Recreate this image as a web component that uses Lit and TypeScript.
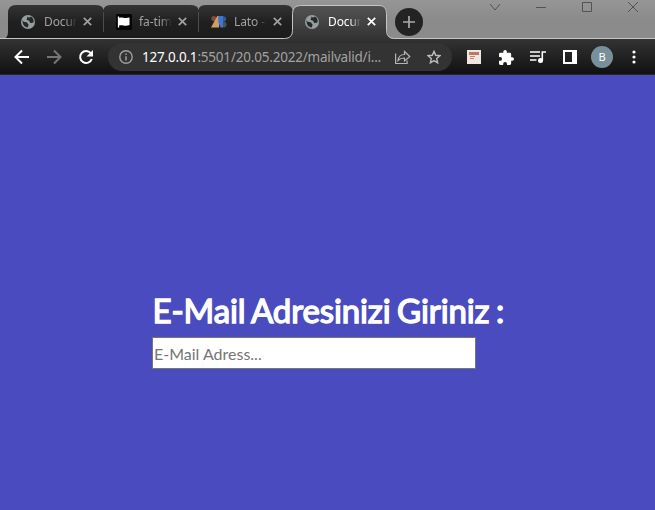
import { LitElement, html, css, svg, nothing } from "lit";
import { customElement, property } from "lit/decorators.js";

const globe = svg`<svg width="14" height="14" viewBox="0 0 14 14"><circle cx="7" cy="7" r="7" fill="#969e9f"/><path d="M1.500 4.800c.3 1.900 2 2.300 3.900 2.500 1.500.2.900 1.600 2.300 2.200l-1 2.900C3.600 12.400 1.200 9.800 1.500 4.800zM6.300 1.600c.5 1.800-.9 2-.7 3 .3 1.200 1.900.6 2.700 1.400.8.900 0 1.900 1.300 2 1 .1 1.900-.4 3-.5.4-2.900-1-5.100-2.800-5.900-.5 1.300-2.100 1.300-3.500 0z" fill="#272929"/></svg>`;
const flag = svg`<svg width="16" height="16" viewBox="0 0 16 16"><rect width="16" height="16" rx="1.5" fill="#050505"/><path d="M2.500 2.500v11" stroke="#fff" stroke-width="1.3"/><path d="M3 4c3-1.4 5 1 10.500-.4v7.500c-5 1.800-7-.8-10.500.5z" fill="#fff"/></svg>`;
const fonts = svg`<svg width="16" height="12" viewBox="0 0 16 12"><circle cx="2.800" cy="2.600" r="2.500" fill="#804b3a"/><path d="M0 11.500 6.200 0H8v11.500z" fill="#cfa05b"/><circle cx="12.600" cy="8.600" r="3" fill="#3e5a50"/><circle cx="12.300" cy="3" r="2.800" fill="#315a9f"/><path d="M7.200 0H12v11.500H9.500L7.200 6z" fill="#3f73d4"/></svg>`;

@customElement("browser-tab")
class BrowserTab extends LitElement {
  @property() label = "";
  @property({ type: Boolean, reflect: true }) active = false;
  @property({ attribute: false }) icon: unknown = nothing;
  static styles = css`
    :host { display: flex; box-sizing: border-box; height: 33px; padding-left: 13px; align-items: center; color: #a1a1a1; position: relative; }
    .icon { width: 16px; display: flex; justify-content: flex-start; flex: none; }
    .title { width: 33px; margin-left: 7px; overflow: hidden; white-space: nowrap; font: 12px/18px "Noto Sans", sans-serif; letter-spacing: -0.1px;
      -webkit-mask-image: linear-gradient(90deg, #000 65%, transparent 100%); mask-image: linear-gradient(90deg, #000 65%, transparent 100%); }
    .close { margin-left: 6px; }
    :host([active]) { color: #fff; }
  `;
  render() {
    return html`<span class="icon">${this.icon}</span><span class="title">${this.label}</span>
      <svg class="close" width="9" height="9" viewBox="0 0 9 9"><path d="M.8.8l7.400 7.400M8.200.8L.8 8.200" stroke="currentColor" stroke-width="1.700"/></svg>`;
  }
}

@customElement("app-root")
class AppRoot extends LitElement {
  static styles = css`
    :host { display: flex; flex-direction: column; height: 510px; overflow: hidden; background: #4a4bbf; font-family: "Noto Sans", "Open Sans", sans-serif; }
    .strip { height: 39px; flex: none; position: relative; display: flex; background: linear-gradient(#969696, #8b8b8b 50%, #8b8b8b); }
    .frames { position: absolute; left: 0; top: 0; }
    .tabs { display: grid; grid-template-columns: 95px 95px 94px 95px; padding: 5px 0 0 8px; }
    .add { width: 28px; height: 28px; margin: 8px 0 0 8px; position: relative; }
    .controls { margin-left: auto; position: relative; height: 15px; }
    svg { display: block; }
    .bar { height: 36px; flex: none; display: flex; align-items: center; background: linear-gradient(#333, #111 97%, #38382f); }
    .nav { display: flex; width: 108px; }
    .url { width: 344px; height: 28px; border-radius: 14px; background: #333; display: flex; align-items: center; color: #a2a2a2; }
    .info { margin-left: 11px; }
    .addr { width: 242px; margin-left: 9px; white-space: nowrap; font-size: 13.500px; line-height: 20px; letter-spacing: -0.2px; }
    .addr b { color: #fff; font-weight: 400; }
    .share { margin-left: 11px; }
    .star { margin-left: 16px; }
    .tools { flex: 1; display: flex; align-items: center; }
    .avatar { width: 22px; height: 22px; border-radius: 50%; background: #78909c; color: #fff; font-size: 11px; line-height: 22px; text-align: center; margin-left: 14px; }
    .note { margin-left: 15px; }
    .puzzle { margin-left: 18px; }
    .queue { margin-left: 16px; }
    .panel { margin-left: 17px; }
    .dots { margin-left: 19px; }
    .page { flex: 1; padding: 215px 0 0 152px; font-family: Lato, sans-serif; }
    h1 { margin: 0; color: #fff; font-size: 33px; line-height: 40px; height: 42px; font-weight: 400; letter-spacing: -0.1px; word-spacing: -1.800px; text-indent: 0.500px; -webkit-text-stroke: 1.400px #fff; white-space: nowrap; }
    input { display: block; box-sizing: border-box; width: 324px; height: 32px; margin: 5px 0 0; padding: 1px; border: 1px solid #767676; border-radius: 0; background: #fff; font: 16px Lato, sans-serif; outline: none; }
    input::placeholder { color: #757575; }
  `;
  render() {
    return html`
      <div class="strip">
        <svg class="frames" width="655" height="39" viewBox="0 0 655 39">
          <defs>
            <linearGradient id="dark" x2="0" y2="1"><stop stop-color="#343434"/><stop offset=".5" stop-color="#202020"/><stop offset="1" stop-color="#1b1b1b"/></linearGradient>
            <linearGradient id="lit" x2="0" y2="1"><stop stop-color="#535353"/><stop offset="1" stop-color="#333"/></linearGradient>
          </defs>
          <path d="M3 39q5-1 5-7V13q0-8 8-8H95q8 0 8.500 5q.5-5 8-5H190q8 0 8.500 5q.5-5 8-5H285q8 0 8 8V39z" fill="url(#dark)"/>
          <path d="M103.500 12v20M198.500 12v20" stroke="#4c4c4c"/>
          <path d="M286 39q6.500-1 6.500-7V13.500q0-8 8-8H379q8 0 8 8V31q0 7 7 8z" fill="url(#lit)"/>
          <path d="M0 38.500H284.500q8 0 8-8V13.500q0-8 8-8H379q7.500 0 7.500 8V30.500q0 8 8 8H655" fill="none" stroke="#c4c6c5"/>
        </svg>
        <div class="tabs">
          <browser-tab label="Docum" .icon=${globe}></browser-tab>
          <browser-tab label="fa-tim" .icon=${flag}></browser-tab>
          <browser-tab label="Lato -" .icon=${fonts}></browser-tab>
          <browser-tab label="Docum" active .icon=${globe}></browser-tab>
        </div>
        <svg class="add" viewBox="0 0 28 28"><circle cx="14" cy="14" r="14" fill="#232323"/><path d="M14 8v12M8 14h12" stroke="#aaa" stroke-width="1.700"/></svg>
        <svg class="controls" width="165" height="15" viewBox="0 0 165 15" fill="none" stroke="#535353"><path d="M0 4l5 6 5-6M46 7.500h10M92.500 2.500h9v9h-9zM138 2l10 10M148 2l-10 10"/></svg>
      </div>
      <div class="bar">
        <svg class="nav" width="108" height="36" viewBox="0 0 108 36" fill="none" stroke-width="2">
          <path d="M29 18H16M22 11.500L15.500 18l6.500 6.500" stroke="#fff"/>
          <path d="M47 18h13M54 11.500l6.500 6.500-6.500 6.500" stroke="#767676"/>
          <path d="M90.800 14.200A6 6 0 1 0 91.800 20" stroke="#fff"/><path d="M93 11v6.500h-6.500z" fill="#fff"/>
        </svg>
        <div class="url">
          <svg class="info" width="14" height="14" viewBox="0 0 14 14"><circle cx="7" cy="7" r="6.200" fill="none" stroke="#a0a0a0" stroke-width="1.400"/><path d="M7 6.200v4.300M7 3.500v1.500" stroke="#a0a0a0" stroke-width="1.500"/></svg>
          <span class="addr"><b>127.0.0.1</b>:5501/20.05.2022/mailvalid/i...</span>
          <svg class="share" width="16" height="15" viewBox="0 0 16 15" fill="none" stroke="#b4b4b4" stroke-width="1.200"><path d="M.6 3.500v10h11.500v-3M3 10.500c.5-4 3-6 6.500-6V1.500l5.300 5-5.300 4.500V8c-3 0-5 .8-6.500 2.500z"/></svg>
          <svg class="star" width="14" height="14" viewBox="0 0 14 14"><path d="M7 1.400l1.700 3.900 4.200.4-3.200 2.900.9 4.200L7 10.600l-3.600 2.200.9-4.200L1.100 5.700l4.200-.4z" fill="none" stroke="#bdbdbd" stroke-width="1.400"/></svg>
        </div>
        <div class="tools">
          <svg class="note" width="14" height="14" viewBox="0 0 14 14"><path d="M0 0h14v14H0z" fill="#eee6df"/><path d="M2 2h10v3H2z" fill="#bf7866"/><path d="M3 6.500h5M3 8.500h4" stroke="#b78966"/></svg>
          <svg class="puzzle" width="15" height="15" viewBox="2 1 21 21"><path fill="#fff" d="M20.500 11H19V7a2 2 0 0 0-2-2h-4V3.500a2.500 2.500 0 0 0-5 0V5H4a2 2 0 0 0-2 2v3.800h1.500a2.700 2.700 0 0 1 0 5.400H2V20c0 1.100.9 2 2 2h3.800v-1.500a2.700 2.700 0 0 1 5.400 0V22H17a2 2 0 0 0 2-2v-4h1.500a2.500 2.500 0 0 0 0-5z"/></svg>
          <svg class="queue" width="16" height="12" viewBox="0 0 16 12"><path d="M0 1h10M0 5h10M0 9h6.500" stroke="#fff" stroke-width="1.600"/><circle cx="10.500" cy="9.500" r="2.500" fill="#fff"/><path d="M12.300 9.500V1H16" fill="none" stroke="#fff" stroke-width="1.600"/></svg>
          <svg class="panel" width="14" height="14" viewBox="0 0 14 14"><path fill="#fff" fill-rule="evenodd" d="M0 0h14v14H0zM2 2v10h7V2z"/></svg>
          <span class="avatar">B</span>
          <svg class="dots" width="4" height="14" viewBox="0 0 4 14" fill="#fff"><circle cx="2" cy="2" r="1.600"/><circle cx="2" cy="7" r="1.600"/><circle cx="2" cy="12" r="1.600"/></svg>
        </div>
      </div>
      <main class="page"><h1>E-Mail Adresinizi Giriniz :</h1><input type="text" placeholder="E-Mail Adress..."></main>`;
  }
}
